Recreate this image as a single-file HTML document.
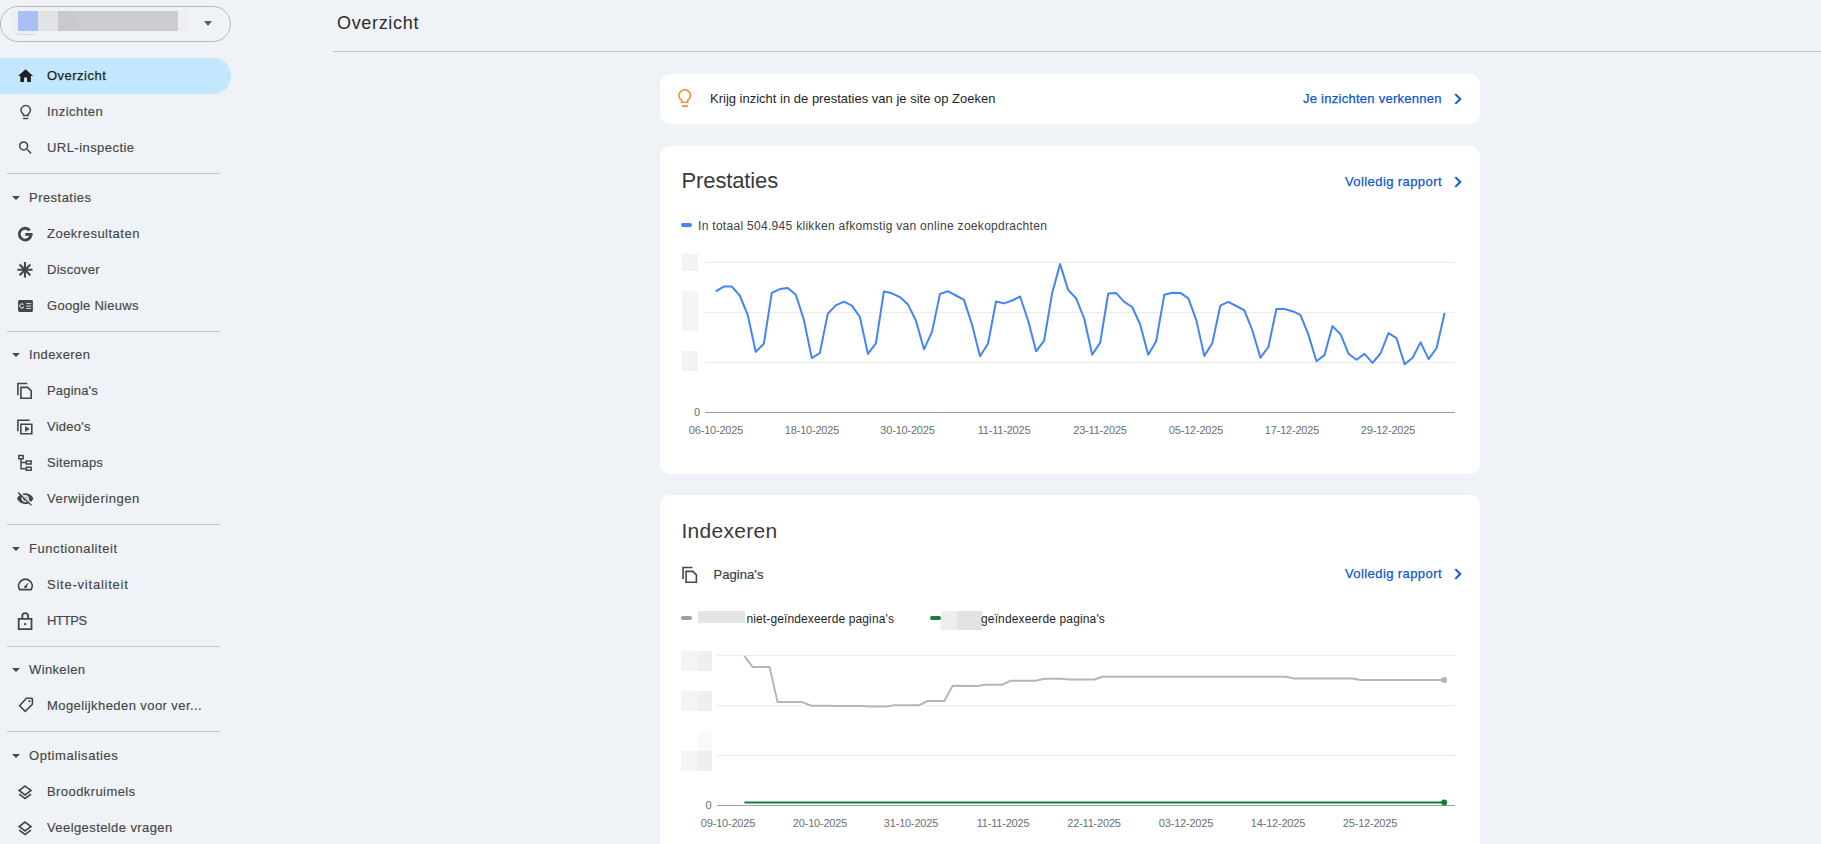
<!DOCTYPE html>
<html><head><meta charset="utf-8">
<style>
*{margin:0;padding:0;box-sizing:border-box}
html,body{width:1821px;height:844px;overflow:hidden;background:#eff2f7;font-family:"Liberation Sans",sans-serif;color:#1f1f1f}
.a{position:absolute;white-space:nowrap}
.nav{position:absolute;left:0;width:231px;height:36px;line-height:36px;font-size:13px;color:#444746}
.nav .t{position:absolute;left:47px;top:0;-webkit-text-stroke:0.15px #444746}
.nav svg{position:absolute;left:16.5px;top:9.5px;width:18px;height:18px;fill:#444746}
.nav.active{background:#c2e7ff;border-radius:0 18px 18px 0;color:#1f1f1f}
.nav.active .t{-webkit-text-stroke:0.25px #1f1f1f}
.nav.active svg{fill:#1f1f1f}
.sec{position:absolute;left:0;width:231px;height:24px;line-height:24px;font-size:13px;color:#444746}
.sec .t{position:absolute;left:29px;-webkit-text-stroke:0.15px #444746}
.sec .tri{position:absolute;left:12px;top:10px;width:0;height:0;border-left:4px solid transparent;border-right:4px solid transparent;border-top:4px solid #444746}
.div{position:absolute;left:7px;width:213px;height:1px;background:#c4c7c5}
.card{position:absolute;left:659.5px;width:820.5px;background:#fff;border-radius:10px}
.link{position:absolute;color:#0b57d0;font-size:13.7px;letter-spacing:0}
.chev{position:absolute;width:10px;height:12px}
.xl{position:absolute;font-size:11px;color:#6b6f74;transform:translateX(-50%);letter-spacing:-0.2px}
.blur{position:absolute;background:#eeeeee}
</style></head>
<body>
<!-- property selector -->
<div class="a" style="left:0px;top:6px;width:231px;height:36px;border:1px solid #b7b9bd;border-radius:18px"></div>
<div class="a" style="left:10px;top:10px;width:177px;height:23px;background:#edeff3"></div>
<div class="a" style="left:18px;top:11px;width:20px;height:20px;background:#a9c0f6"></div>
<div class="a" style="left:38px;top:11px;width:20px;height:20px;background:#e1e3e7"></div>
<div class="a" style="left:58px;top:11px;width:20px;height:20px;background:#c8cacf"></div>
<div class="a" style="left:78px;top:11px;width:100px;height:20px;background:#cccdd1"></div>
<div class="a" style="left:17px;top:34px;width:19px;height:1px;background:#d5d7da"></div>
<div class="a" style="left:203.5px;top:20.5px;width:0;height:0;border-left:4.6px solid transparent;border-right:4.6px solid transparent;border-top:5px solid #5f6368"></div>

<!--SB-->
<div class="nav active" style="top:57.5px"><span class="t" style="letter-spacing:0.48px">Overzicht</span></div>
<div class="nav" style="top:93.5px"><span class="t" style="letter-spacing:0.46px">Inzichten</span></div>
<div class="nav" style="top:129.5px"><span class="t" style="letter-spacing:0.45px">URL-inspectie</span></div>
<div class="div" style="top:173px"></div>
<div class="sec" style="top:185.5px"><span class="tri"></span><span class="t" style="letter-spacing:0.46px">Prestaties</span></div>
<div class="nav" style="top:215.5px"><span class="t" style="letter-spacing:0.49px">Zoekresultaten</span></div>
<div class="nav" style="top:251.5px"><span class="t" style="letter-spacing:0.29px">Discover</span></div>
<div class="nav" style="top:287.5px"><span class="t" style="letter-spacing:0.27px">Google Nieuws</span></div>
<div class="div" style="top:331px"></div>
<div class="sec" style="top:342.5px"><span class="tri"></span><span class="t" style="letter-spacing:0.38px">Indexeren</span></div>
<div class="nav" style="top:372.5px"><span class="t" style="letter-spacing:0.19px">Pagina's</span></div>
<div class="nav" style="top:408.5px"><span class="t" style="letter-spacing:0.23px">Video's</span></div>
<div class="nav" style="top:444.5px"><span class="t" style="letter-spacing:0.24px">Sitemaps</span></div>
<div class="nav" style="top:480.5px"><span class="t" style="letter-spacing:0.53px">Verwijderingen</span></div>
<div class="div" style="top:524px"></div>
<div class="sec" style="top:536.5px"><span class="tri"></span><span class="t" style="letter-spacing:0.56px">Functionaliteit</span></div>
<div class="nav" style="top:566.5px"><span class="t" style="letter-spacing:0.77px">Site-vitaliteit</span></div>
<div class="nav" style="top:602.5px"><span class="t" style="letter-spacing:-0.64px">HTTPS</span></div>
<div class="div" style="top:646px"></div>
<div class="sec" style="top:657.5px"><span class="tri"></span><span class="t" style="letter-spacing:0.37px">Winkelen</span></div>
<div class="nav" style="top:687.5px"><span class="t" style="letter-spacing:0.42px">Mogelijkheden voor ver...</span></div>
<div class="div" style="top:731px"></div>
<div class="sec" style="top:743.5px"><span class="tri"></span><span class="t" style="letter-spacing:0.55px">Optimalisaties</span></div>
<div class="nav" style="top:773.5px"><span class="t" style="letter-spacing:0.42px">Broodkruimels</span></div>
<div class="nav" style="top:809.5px"><span class="t" style="letter-spacing:0.41px">Veelgestelde vragen</span></div>
<svg class="a" style="left:0;top:0" width="60" height="844"><path transform="translate(16.6,67.05) scale(0.75)" fill="#1f1f1f" d="M10 20v-6h4v6h5v-8h3L12 3 2 12h3v8z"/><g fill="none" stroke="#444746" stroke-width="1.5"><path d="M23.4 114.2A4.7 4.7 0 1 1 28.1 114.2V115.6H23.4Z"/><path d="M23 118.5H28.3" stroke-width="1.4"/></g><path transform="translate(16.7,139.0) scale(0.73)" fill="#444746" d="M15.5 14h-.79l-.28-.27A6.471 6.471 0 0 0 16 9.5 6.5 6.5 0 1 0 9.5 16c1.61 0 3.09-.59 4.23-1.57l.27.28v.79l5 4.99L20.49 19l-4.99-5zm-6 0C7.01 14 5 11.99 5 9.5S7.01 5 9.5 5 14 7.01 14 9.5 11.99 14 9.5 14z"/><g fill="none" stroke="#444746" stroke-width="2.8"><path d="M29.7 230.4A5.9 5.9 0 1 0 31.05 234.4"/></g><rect x="25.2" y="233.0" width="7.3" height="2.8" fill="#444746"/><g stroke="#444746" stroke-width="2.1"><path d="M24.95 262.1V277.5M17.4 269.8H32.5M19.6 264.45L30.3 275.15M30.3 264.45L19.6 275.15"/></g><rect x="18.1" y="300" width="14.8" height="11.9" rx="1.4" fill="#444746"/><g fill="none" stroke="#eff2f7" stroke-width="1"><path d="M23.6 304.5A2.2 2.2 0 1 0 23.8 307.2H22.4"/><path d="M26.2 303.6H31.2M26.2 306H31.2M26.2 308.4H31.2" stroke-width="0.9"/></g><g fill="none" stroke="#444746" stroke-width="1.6"><path d="M17.9 395.2V383.5H27.3"/><path d="M20.9 387.4H27.7L31.2 390.9V398.3H20.9Z"/></g><g fill="none" stroke="#444746" stroke-width="1.6"><path d="M17.9 431.3V420.2H29.6"/><path d="M20.9 424.2H31.8V433.7H20.9Z"/></g><path d="M25.1 425.9L29.7 428.95 25.1 432Z" fill="#444746"/><g fill="none" stroke="#444746" stroke-width="1.5"><path d="M18.85 455.45H23.15V458.75H18.85Z"/><path d="M26.35 460.95H31.15V464.05H26.35Z"/><path d="M26.35 467.15H31.15V470.35H26.35Z"/><path d="M21 458.75V469.5M21 462.5H26.35M21 468.75H26.35"/></g><path transform="translate(16.25,489.95) scale(0.75,0.72)" fill="#444746" d="M12 7c2.76 0 5 2.24 5 5 0 .65-.13 1.26-.36 1.83l2.92 2.92c1.51-1.26 2.7-2.89 3.43-4.75-1.73-4.39-6-7.5-11-7.5-1.4 0-2.74.25-3.980.7l2.16 2.16C10.74 7.13 11.35 7 12 7zM2 4.27l2.28 2.28.46.46C3.08 8.3 1.78 10.02 1 12c1.730 4.39 6 7.5 11 7.5 1.55 0 3.03-.3 4.38-.84l.42.42L19.73 22 21 20.73 3.27 3 2 4.27zM7.53 9.8l1.55 1.55c-.05.21-.08.43-.08.65 0 1.66 1.34 3 3 3 .22 0 .44-.03.65-.08l1.55 1.55c-.67.33-1.41.53-2.2.53-2.76 0-5-2.24-5-5 0-.79.2-1.53.53-2.2zm4.31-.78l3.15 3.15.02-.16c0-1.66-1.34-3-3-3l-.17.01z"/><g fill="none" stroke="#444746" stroke-width="1.8"><path d="M19.6 589.6A6.8 6.8 0 1 1 31.2 589.6Z" stroke-linejoin="round"/></g><path d="M24.3 586.6L28.9 582.3 26.3 587.9Z" fill="#444746"/><circle cx="25.3" cy="587.2" r="1.1" fill="#444746"/><g fill="none" stroke="#444746" stroke-width="1.8"><path d="M18.7 618.8H31.5V629.1H18.7Z"/><path d="M22.3 618.8V615.9A2.85 2.85 0 0 1 28 615.9V618.8"/></g><circle cx="25.1" cy="624.1" r="1.2" fill="#444746"/><g fill="none" stroke="#444746" stroke-width="1.6" stroke-linejoin="round"><path d="M26.4 698.2H31.6A0.8 0.8 0 0 1 32.4 699V704.2L25.2 711.4 19.6 705.8Z"/></g><circle cx="29.4" cy="701.2" r="1.1" fill="#444746"/><g fill="none" stroke="#444746" stroke-width="1.6" stroke-linejoin="miter"><path d="M25.05 786.1L31 790.5 25.05 794.9 19.1 790.5Z"/><path d="M19.1 794.1L25.05 798.5 31 794.1"/></g><g fill="none" stroke="#444746" stroke-width="1.6" stroke-linejoin="miter"><path d="M25.05 822.1L31 826.5 25.05 830.9 19.1 826.5Z"/><path d="M19.1 830.1L25.05 834.5 31 830.1"/></g></svg>
<!--/SB-->

<!-- header -->
<div class="a" style="left:337px;top:8px;font-size:18px;line-height:30px;color:#2d2d2d;letter-spacing:0.67px">Overzicht</div>
<div class="a" style="left:333px;top:51px;width:1488px;height:1px;background:#c4c7c5"></div>

<!-- card 1 -->
<div class="card" style="top:73.75px;height:50.25px"></div>
<!--card1-->
<svg class="a" style="left:0;top:0" width="700" height="120"><g fill="none" stroke="#e8952e" stroke-width="1.6"><path d="M681.6 100.3A5.75 5.75 0 1 1 687.7 100.3V102.3H681.6Z"/><path d="M681.9 106.15H688" stroke-width="1.7"/></g></svg>
<div class="a" style="left:710px;top:89px;line-height:20px;font-size:13px;color:#1f1f1f">Krijg inzicht in de prestaties van je site op Zoeken</div>
<div class="a link" style="left:1303px;top:89px;line-height:20px;font-size:13px;letter-spacing:0.26px;-webkit-text-stroke:0.25px #0b57d0">Je inzichten verkennen</div>
<svg class="a" style="left:1453px;top:92px" width="10" height="14" viewBox="0 0 10 14"><path d="M2.3 2.1L7.3 7 2.3 11.9" fill="none" stroke="#0b57d0" stroke-width="1.9"/></svg>
<!--/card1-->

<!-- card 2 -->
<div class="card" style="top:146px;height:328px"></div>
<!--card2-->
<div class="a" style="left:681.5px;top:167px;font-size:22px;line-height:28px;color:#3a3a3a;letter-spacing:-0.12px">Prestaties</div>
<div class="a link" style="left:1345px;top:172px;line-height:20px;font-size:13px;letter-spacing:0.41px;-webkit-text-stroke:0.25px #0b57d0">Volledig rapport</div>
<svg class="a" style="left:1453px;top:174.5px" width="10" height="14" viewBox="0 0 10 14"><path d="M2.3 2.1L7.3 7 2.3 11.9" fill="none" stroke="#0b57d0" stroke-width="1.9"/></svg>
<div class="a" style="left:681px;top:223px;width:11px;height:4px;border-radius:2px;background:#4285f4"></div>
<div class="a" style="left:698px;top:216px;line-height:20px;font-size:12px;letter-spacing:0.3px;color:#3c4043">In totaal 504.945 klikken afkomstig van online zoekopdrachten</div>
<div class="blur" style="left:682px;top:254px;width:16px;height:17px;background:#f3f3f3"></div>
<div class="blur" style="left:682px;top:291px;width:16px;height:39.5px;background:#f5f5f5"></div>
<div class="blur" style="left:682px;top:351px;width:16px;height:20px;background:#f3f3f3"></div>
<div class="a" style="left:694px;top:405px;line-height:14px;font-size:11px;color:#6b6f74">0</div>
<svg class="a" style="left:0;top:0" width="1821" height="844">
<path d="M705 262.5H1455M705 312.5H1455M705 362.5H1455" stroke="#ebebeb" stroke-width="1"/>
<path d="M705 412.5H1455" stroke="#9e9e9e" stroke-width="1"/>
<path d="M715.7,291.3 L723.7,286.6 L731.7,286.4 L739.7,295.5 L747.7,314.8 L755.7,351.9 L763.8,343.8 L771.8,292.9 L779.8,289.1 L787.8,287.9 L795.8,294.7 L803.8,319.5 L811.8,358.1 L819.8,353.1 L827.8,313.6 L835.8,305.4 L843.9,301.7 L851.9,305.6 L859.9,317.0 L867.9,353.9 L875.9,343.4 L883.9,291.5 L891.9,293.3 L899.9,297.1 L907.9,304.4 L915.9,320.5 L924.0,349.3 L932.0,331.9 L940.0,293.9 L948.0,291.3 L956.0,295.5 L964.0,299.9 L972.0,324.5 L980.0,356.3 L988.0,343.8 L996.0,301.5 L1004.1,303.4 L1012.1,300.5 L1020.1,296.5 L1028.1,320.5 L1036.1,351.3 L1044.1,340.6 L1052.1,293.3 L1060.1,264.1 L1068.1,289.9 L1076.1,298.3 L1084.2,318.5 L1092.2,354.7 L1100.2,342.6 L1108.2,293.5 L1116.2,293.1 L1124.2,301.9 L1132.2,307.0 L1140.2,324.5 L1148.2,354.7 L1156.2,341.2 L1164.3,294.7 L1172.3,292.7 L1180.3,292.9 L1188.3,298.3 L1196.3,320.1 L1204.3,355.9 L1212.3,343.2 L1220.3,305.6 L1228.3,301.9 L1236.3,306.0 L1244.4,310.4 L1252.4,330.5 L1260.4,357.7 L1268.4,347.0 L1276.4,309.0 L1284.4,309.0 L1292.4,311.2 L1300.4,314.8 L1308.4,334.6 L1316.4,361.3 L1324.5,355.1 L1332.5,326.1 L1340.5,334.2 L1348.5,353.7 L1356.5,359.7 L1364.5,353.9 L1372.5,362.9 L1380.5,353.5 L1388.5,333.1 L1396.5,338.2 L1404.6,364.2 L1412.6,357.7 L1420.6,342.4 L1428.6,359.1 L1436.6,348.0 L1444.6,313.0" fill="none" stroke="#4285f4" stroke-width="2" stroke-linejoin="round"/>
</svg>
<div class="xl" style="left:716px;top:423px;line-height:14px">06-10-2025</div><div class="xl" style="left:812px;top:423px;line-height:14px">18-10-2025</div><div class="xl" style="left:907.5px;top:423px;line-height:14px">30-10-2025</div><div class="xl" style="left:1004px;top:423px;line-height:14px">11-11-2025</div><div class="xl" style="left:1100px;top:423px;line-height:14px">23-11-2025</div><div class="xl" style="left:1196px;top:423px;line-height:14px">05-12-2025</div><div class="xl" style="left:1292px;top:423px;line-height:14px">17-12-2025</div><div class="xl" style="left:1388px;top:423px;line-height:14px">29-12-2025</div>
<!--/card2-->

<!-- card 3 -->
<div class="card" style="top:494.75px;height:360px"></div>
<!--card3-->
<div class="a" style="left:681.5px;top:517px;font-size:21px;line-height:28px;color:#3a3a3a;letter-spacing:0.29px">Indexeren</div>
<svg class="a" style="left:0;top:0" width="720" height="600"><g transform="translate(665.2,184)" fill="none" stroke="#444746" stroke-width="1.6"><path d="M17.9 395.2V383.5H27.3"/><path d="M20.9 387.4H27.7L31.2 390.9V398.3H20.9Z"/></g></svg>
<div class="a" style="left:713.5px;top:564.5px;line-height:20px;font-size:13px;color:#3c4043;letter-spacing:0.06px;-webkit-text-stroke:0.2px #3c4043">Pagina's</div>
<div class="a link" style="left:1345px;top:563.5px;line-height:20px;font-size:13px;letter-spacing:0.41px;-webkit-text-stroke:0.25px #0b57d0">Volledig rapport</div>
<svg class="a" style="left:1453px;top:566.5px" width="10" height="14" viewBox="0 0 10 14"><path d="M2.3 2.1L7.3 7 2.3 11.9" fill="none" stroke="#0b57d0" stroke-width="1.9"/></svg>
<div class="a" style="left:681px;top:616px;width:11px;height:4px;border-radius:2px;background:#9aa0a6"></div>
<div class="blur" style="left:698px;top:611px;width:47px;height:12px;background:#e3e4e6"></div>
<div class="a" style="left:746.5px;top:609px;line-height:20px;font-size:12px;letter-spacing:0.12px;color:#1f1f1f">niet-geïndexeerde pagina's</div>
<div class="a" style="left:930px;top:616px;width:11px;height:4px;border-radius:2px;background:#137f3b"></div>
<div class="blur" style="left:941px;top:610.5px;width:16px;height:19px;background:#eeeeee"></div><div class="blur" style="left:957px;top:610.5px;width:24.5px;height:19px;background:#e3e3e3"></div>
<div class="a" style="left:981px;top:609px;line-height:20px;font-size:12px;letter-spacing:0.14px;color:#1f1f1f">geïndexeerde pagina's</div>
<div class="blur" style="left:681px;top:651px;width:17px;height:20px;background:#f4f4f4"></div><div class="blur" style="left:698px;top:651px;width:14px;height:20px;background:#efefef"></div>
<div class="blur" style="left:681px;top:691px;width:17px;height:20px;background:#f4f4f4"></div><div class="blur" style="left:698px;top:691px;width:14px;height:20px;background:#efefef"></div>
<div class="blur" style="left:698px;top:732px;width:14px;height:19px;background:#f9f9f9"></div><div class="blur" style="left:681px;top:751px;width:17px;height:20px;background:#f5f5f5"></div><div class="blur" style="left:698px;top:751px;width:14px;height:20px;background:#efefef"></div>
<div class="a" style="left:705.5px;top:798px;line-height:14px;font-size:11px;color:#6b6f74">0</div>
<svg class="a" style="left:0;top:0" width="1821" height="844">
<path d="M717 655.5H1455M717 705.5H1455M717 755.5H1455" stroke="#ebebeb" stroke-width="1"/>
<path d="M717 805.5H1455" stroke="#9e9e9e" stroke-width="1"/>
<path d="M744.4,656.0 L752.5,666.9 L769.5,666.9 L777.6,702.1 L802.4,702.1 L810.9,705.7 L828.0,705.7 L836.5,706.1 L862.1,706.1 L870.6,706.6 L885.6,706.6 L894.1,705.3 L918.9,705.3 L927.4,701.0 L944.4,701.0 L952.6,685.7 L977.4,686.0 L985.7,684.7 L1002.5,684.7 L1010.8,680.7 L1035.9,680.7 L1044.2,678.8 L1061.4,678.8 L1068.5,679.5 L1094.2,679.5 L1102.2,676.7 L1285.7,676.7 L1293.9,678.5 L1352.2,678.5 L1360.8,680.1 L1444.1,680.1" fill="none" stroke="#b4b6b9" stroke-width="2" stroke-linejoin="round"/>
<circle cx="1444.1" cy="680.1" r="3" fill="#b4b6b9"/>
<path d="M744.4 802.6H1444" stroke="#137f3b" stroke-width="2"/>
<circle cx="1444.2" cy="802.6" r="3" fill="#137f3b"/>
</svg>
<div class="xl" style="left:728px;top:816px;line-height:14px">09-10-2025</div><div class="xl" style="left:820px;top:816px;line-height:14px">20-10-2025</div><div class="xl" style="left:911px;top:816px;line-height:14px">31-10-2025</div><div class="xl" style="left:1003px;top:816px;line-height:14px">11-11-2025</div><div class="xl" style="left:1094px;top:816px;line-height:14px">22-11-2025</div><div class="xl" style="left:1186px;top:816px;line-height:14px">03-12-2025</div><div class="xl" style="left:1278px;top:816px;line-height:14px">14-12-2025</div><div class="xl" style="left:1370px;top:816px;line-height:14px">25-12-2025</div>
<!--/card3-->

</body></html>
